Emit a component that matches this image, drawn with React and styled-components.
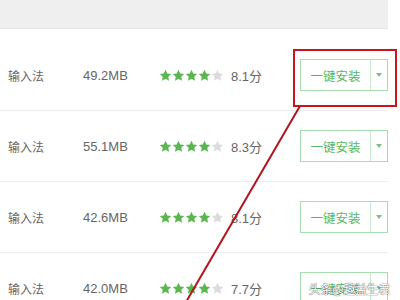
import React from 'react';
import styled, { createGlobalStyle } from 'styled-components';

const Global = createGlobalStyle`
  body {
    margin: 0;
    background: #fff;
    font-family: 'Noto Sans CJK SC', 'Liberation Sans', sans-serif;
  }
`;

const Page = styled.div`
  position: relative;
  width: 400px;
  height: 300px;
  overflow: hidden;
`;

const TopBand = styled.div`
  width: 388px;
  height: 28px;
  background: #efefef;
  border-bottom: 1px solid #e4e4e4;
`;

const List = styled.div`
  width: 388px;
  margin-top: 11px;
`;

const Row = styled.div`
  display: grid;
  grid-template-columns: 75px 74px 74px 69px auto;
  align-items: center;
  height: 70px;
  padding-left: 8px;
  border-bottom: 1px solid #ececec;
  font-size: 12px;
  color: #666;
`;

const Size = styled.span`
  font-family: 'Liberation Sans', sans-serif;
  font-size: 13px;
`;

const Score = styled.span`
  font-size: 13px;
  font-family: 'Liberation Sans', 'Noto Sans CJK SC', sans-serif;
`;

const Stars = styled.div`
  display: flex;
  padding-left: 2px;
`;

const Split = styled.div`
  position: relative;
  display: flex;
  width: 86px;
  height: 30px;
  border: 1px solid #a7dcae;
`;

const Main = styled.div`
  flex: 1;
  display: flex;
  align-items: center;
  justify-content: center;
  color: #55b961;
  font-size: 12.5px;
  border-right: 1px solid #c9e9cd;
`;

const Drop = styled.div`
  width: 16px;
  display: flex;
  align-items: center;
  justify-content: center;
  &::after {
    content: '';
    border-left: 3px solid transparent;
    border-right: 3px solid transparent;
    border-top: 4px solid #7cbf84;
  }
`;

const Highlight = styled.div`
  position: absolute;
  left: -8px;
  top: -11px;
  width: 100px;
  height: 54px;
  border: 2px solid #c9161e;
`;

const Arrow = styled.svg`
  position: absolute;
  left: 0;
  top: 0;
  pointer-events: none;
`;

const Watermark = styled.div`
  position: absolute;
  right: 10px;
  top: 280px;
  font-size: 12px;
  color: #fff;
  letter-spacing: -0.3px;
  text-shadow: 0 0 1px #555, 0 0 1px #555;
`;

const Star = ({ on }) => (
  <svg width="13" height="13" viewBox="0 0 24 24">
    <path
      d="M12 1.5l3.2 6.9 7.3.8-5.4 5 1.5 7.3L12 17.8l-6.6 3.7 1.5-7.3-5.4-5 7.3-.8z"
      fill={on ? '#58b84f' : '#dcdcdc'}
    />
  </svg>
);

const apps = [
  { size: '49.2MB', score: '8.1分', boxed: true },
  { size: '55.1MB', score: '8.3分' },
  { size: '42.6MB', score: '8.1分' },
  { size: '42.0MB', score: '7.7分' },
];

export default function App() {
  return (
    <Page>
      <Global />
      <TopBand />
      <List>
        {apps.map((a, i) => (
          <Row key={i}>
            <span>输入法</span>
            <Size>{a.size}</Size>
            <Stars>
              {[0, 1, 2, 3, 4].map((s) => (
                <Star key={s} on={s < 4} />
              ))}
            </Stars>
            <Score>{a.score}</Score>
            <Split>
              <Main>一键安装</Main>
              <Drop />
              {a.boxed && <Highlight />}
            </Split>
          </Row>
        ))}
      </List>
      <Arrow width="400" height="300">
        <line x1="300" y1="106" x2="186" y2="302" stroke="#b3141c" strokeWidth="2" />
      </Arrow>
      <Watermark>头条@趣益生君</Watermark>
    </Page>
  );
}
